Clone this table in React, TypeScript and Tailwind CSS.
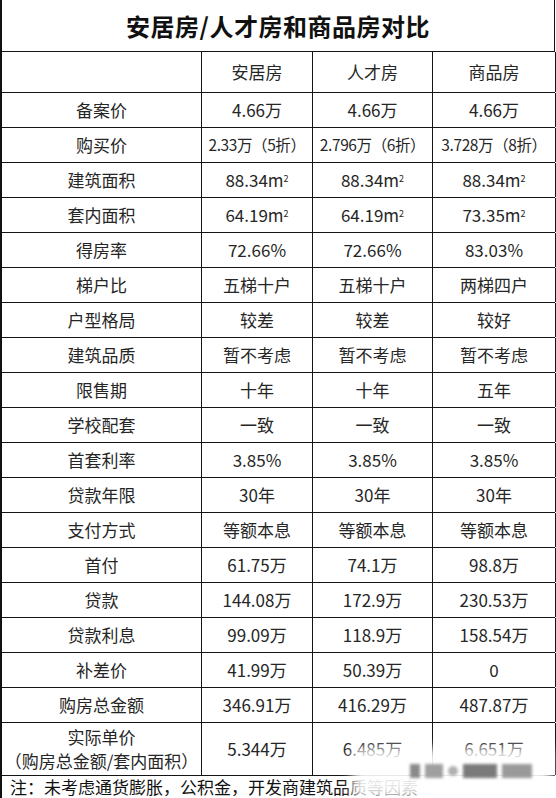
import type { ReactNode } from 'react'

type Row = { label: ReactNode; values: ReactNode[]; tall?: boolean; tight?: boolean }

const m2 = (n: string) => (
  <>
    {n}m<sup className="text-[9px] relative -top-[1px]">2</sup>
  </>
)

const rows: Row[] = [
  { label: '备案价', values: ['4.66万', '4.66万', '4.66万'] },
  { label: '购买价', values: ['2.33万（5折）', '2.796万（6折）', '3.728万（8折）'], tight: true },
  { label: '建筑面积', values: [m2('88.34'), m2('88.34'), m2('88.34')] },
  { label: '套内面积', values: [m2('64.19'), m2('64.19'), m2('73.35')] },
  { label: '得房率', values: ['72.66%', '72.66%', '83.03%'] },
  { label: '梯户比', values: ['五梯十户', '五梯十户', '两梯四户'] },
  { label: '户型格局', values: ['较差', '较差', '较好'] },
  { label: '建筑品质', values: ['暂不考虑', '暂不考虑', '暂不考虑'] },
  { label: '限售期', values: ['十年', '十年', '五年'] },
  { label: '学校配套', values: ['一致', '一致', '一致'] },
  { label: '首套利率', values: ['3.85%', '3.85%', '3.85%'] },
  { label: '贷款年限', values: ['30年', '30年', '30年'] },
  { label: '支付方式', values: ['等额本息', '等额本息', '等额本息'] },
  { label: '首付', values: ['61.75万', '74.1万', '98.8万'] },
  { label: '贷款', values: ['144.08万', '172.9万', '230.53万'] },
  { label: '贷款利息', values: ['99.09万', '118.9万', '158.54万'] },
  { label: '补差价', values: ['41.99万', '50.39万', '0'] },
  { label: '购房总金额', values: ['346.91万', '416.29万', '487.87万'] },
  {
    label: (
      <div className="flex flex-col items-center leading-[24px]">
        <span>实际单价</span>
        <span>（购房总金额/套内面积）</span>
      </div>
    ),
    values: ['5.344万', '6.485万', '6.651万'],
    tall: true,
  },
]

const cols = 'grid grid-cols-[200px_111px_120px_123px]'
const cell = 'flex items-center justify-center border-r-[1.5px] border-[#141414] whitespace-nowrap'

export default function App() {
  return (
    <div
      className="relative h-[798px] w-[556px] overflow-hidden bg-white text-[#262626]"
      style={{ fontFamily: '"Noto Sans CJK SC", "Noto Sans", sans-serif' }}
    >
      <div className="w-[555px] border-l-[2.5px] border-[#111]">
        <div className="flex h-[52px] items-center justify-center border-b-[1.5px] border-r-[1.5px] border-[#141414] text-[24px] font-bold tracking-[0.5px] text-[#111]">
          安居房/人才房和商品房对比
        </div>
        <div className={`${cols} h-[41px] border-b-[1.5px] border-[#141414] text-[17px]`}>
          <div className={cell}></div>
          <div className={cell}>安居房</div>
          <div className={cell}>人才房</div>
          <div className={cell}>商品房</div>
        </div>
        {rows.map((r, i) => (
          <div
            key={i}
            className={`${cols} ${r.tall ? 'h-[52px]' : 'h-[35px] border-b-[1.5px] border-[#141414]'} text-[17px]`}
          >
            <div className={cell}>{r.label}</div>
            {r.values.map((v, j) => (
              <div key={j} className={`${cell} ${r.tight ? 'text-[15.5px] tracking-[-0.4px]' : ''}`}>
                {v}
              </div>
            ))}
          </div>
        ))}
        <div className="h-[23px] border-t-[1.5px] border-[#141414] pl-[8px] text-[17px] leading-[22px] text-[#111]">
          注：未考虑通货膨胀，公积金，开发商建筑品质等因素
        </div>
      </div>

      {/* watermark */}
      <div className="absolute left-[352px] top-[748px] h-[50px] w-[200px] bg-white/90 blur-[6px]"></div>
      <div className="absolute left-[410px] top-[764px] flex items-center gap-[5px] blur-[1.5px]">
        <div className="h-[14px] w-[10px] bg-[#8a8a8a]"></div>
        <div className="h-[14px] w-[18px] bg-[#a0a0a0]"></div>
        <div className="h-[10px] w-[10px] rounded-full bg-[#b0b0b0]"></div>
        <div className="h-[14px] w-[34px] bg-[#7a7a7a]"></div>
        <div className="h-[14px] w-[30px] bg-[#9a9a9a]"></div>
      </div>
    </div>
  )
}
